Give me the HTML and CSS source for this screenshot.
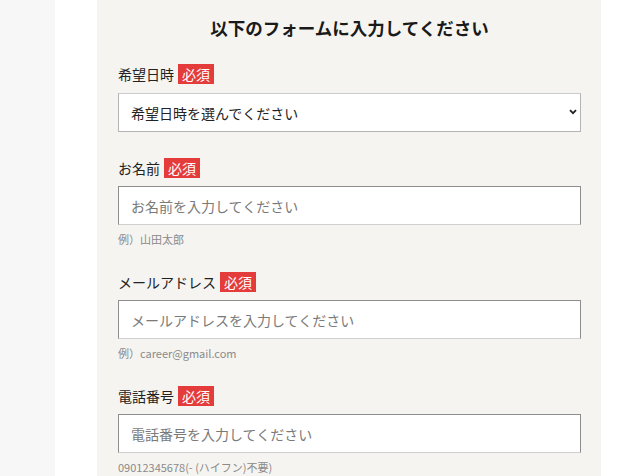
FILE: index.html
```html
<!DOCTYPE html>
<html lang="ja">
<head>
<meta charset="utf-8">
<link rel="stylesheet" href="styles.css">
</head>
<body>
<div class="page">
  <div class="side"></div>
  <div class="spacer"></div>
  <main class="panel">
    <h2 class="title">以下のフォームに入力してください</h2>

    <div class="group">
      <div class="label label-first">希望日時<span class="req">必須</span></div>
      <div class="select-wrap">
        <select class="field select">
          <option>希望日時を選んでください</option>
        </select>
        <svg class="chev" width="8" height="6" viewBox="0 0 8 6"><path d="M1 1.2 L4 4.2 L7 1.2" fill="none" stroke="#222" stroke-width="1.8"/></svg>
      </div>
    </div>

    <div class="group">
      <div class="label">お名前<span class="req">必須</span></div>
      <input class="field" type="text" placeholder="お名前を入力してください">
      <p class="hint">例）山田太郎</p>
    </div>

    <div class="group">
      <div class="label">メールアドレス<span class="req">必須</span></div>
      <input class="field" type="text" placeholder="メールアドレスを入力してください">
      <p class="hint">例）career@gmail.com</p>
    </div>

    <div class="group">
      <div class="label">電話番号<span class="req">必須</span></div>
      <input class="field" type="text" placeholder="電話番号を入力してください">
      <p class="hint">09012345678(- (ハイフン)不要)</p>
    </div>
  </main>
  <div class="rest"></div>
</div>
</body>
</html>
```

FILE: styles.css
```css
html, body {
  margin: 0;
  padding: 0;
  height: 100%;
  overflow: hidden;
  background: #fff;
  font-family: "Noto Sans CJK JP", "Noto Sans", sans-serif;
  color: #222;
}
.page {
  display: flex;
  height: 476px;
}
.side {
  width: 55px;
  background: #f7f7f7;
}
.spacer {
  width: 42px;
  background: #fff;
}
.panel {
  width: 504px;
  box-sizing: border-box;
  padding: 16px 20px 0 21px;
  background: #f6f4f0;
}
.rest {
  flex: 1;
  background: #fff;
}
.title {
  margin: 0 0 24px;
  font-size: 17.5px;
  line-height: 24px;
  font-weight: 700;
  text-align: center;
  color: #1a1a1a;
}
.group {
  margin-bottom: 26px;
}
.label {
  display: flex;
  align-items: center;
  height: 20px;
  font-size: 14px;
  line-height: 20px;
  color: #222;
  margin-bottom: 8px;
}
.label-first {
  margin-bottom: 9px;
}
.req {
  margin-left: 4px;
  padding: 0 4px;
  background: #e43b3b;
  color: #fff;
  font-size: 14px;
  line-height: 20px;
}
.field {
  display: block;
  width: 100%;
  height: 39px;
  box-sizing: border-box;
  margin: 0;
  padding: 0 12px;
  font-family: "Noto Sans CJK JP", "Noto Sans", sans-serif;
  font-size: 14px;
  color: #333;
  background: #fff;
  border: 1px solid #8d8d8d;
  border-bottom-color: #cfcfcf;
  border-radius: 0;
  outline: none;
}
.field::placeholder {
  color: #7a7a7a;
}
.select-wrap {
  position: relative;
  margin-bottom: 2px;
}
.select {
  -webkit-appearance: none;
  appearance: none;
  height: 39px;
  border: 1px solid #b4b4b4;
  border-top-color: #cccccc;
  color: #222;
}
.chev {
  position: absolute;
  right: 4px;
  top: 16px;
}
.hint {
  margin: 7px 0 0;
  font-size: 11px;
  line-height: 14px;
  color: #8a8a8a;
}
```
